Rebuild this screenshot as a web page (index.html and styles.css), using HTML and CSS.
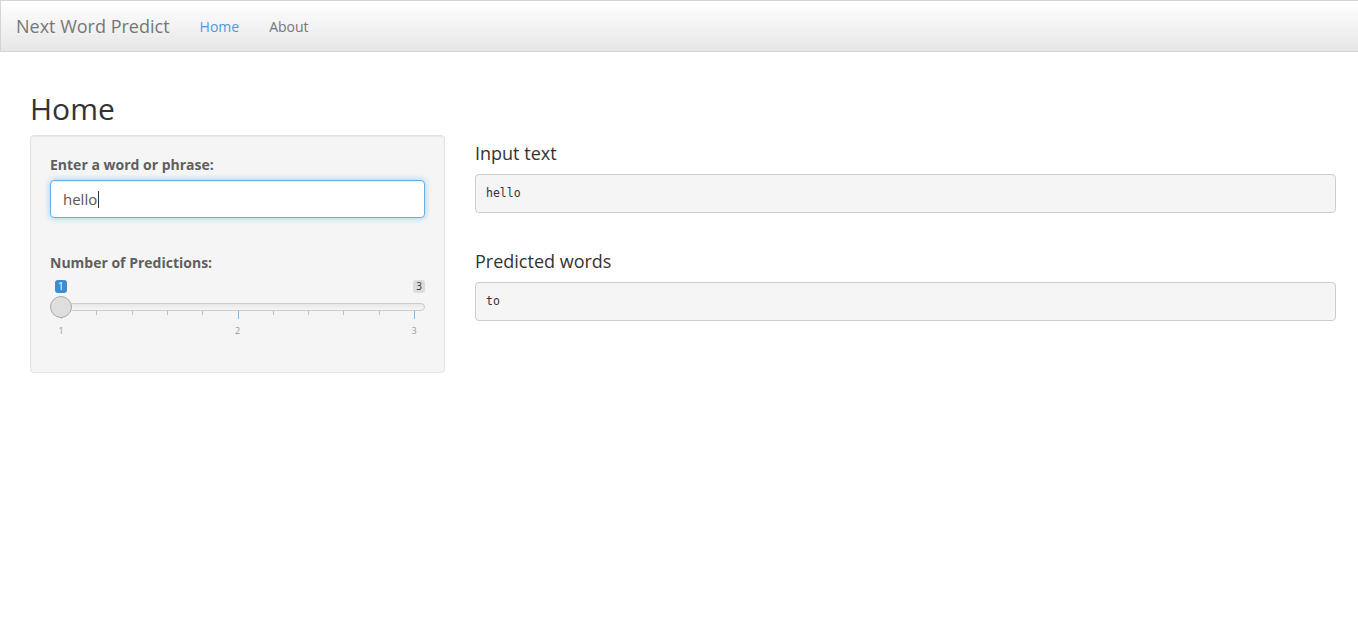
FILE: index.html
```html
<!DOCTYPE html>
<html>
<head>
<meta charset="utf-8">
<title>Next Word Predict</title>
<link rel="stylesheet" href="styles.css">
</head>
<body>
<nav class="navbar">
  <span class="brand">Next Word Predict</span>
  <ul class="nav">
    <li class="nav-item active">Home</li>
    <li class="nav-item">About</li>
  </ul>
</nav>
<main class="page">
  <h2 class="title">Home</h2>
  <div class="row">
    <aside class="side">
      <div class="well">
        <div class="form-group">
          <label class="label">Enter a word or phrase:</label>
          <div class="input" role="textbox">hello<span class="caret"></span></div>
        </div>
        <div class="form-group slider-group">
          <label class="label">Number of Predictions:</label>
          <div class="irs">
            <span class="irs-from">1</span>
            <span class="irs-max">3</span>
            <span class="irs-line"></span>
            <div class="irs-grid">
              <span class="pol major" style="left:0%"></span>
              <span class="pol" style="left:10%"></span>
              <span class="pol" style="left:20%"></span>
              <span class="pol" style="left:30%"></span>
              <span class="pol" style="left:40%"></span>
              <span class="pol major" style="left:50%"></span>
              <span class="pol" style="left:60%"></span>
              <span class="pol" style="left:70%"></span>
              <span class="pol" style="left:80%"></span>
              <span class="pol" style="left:90%"></span>
              <span class="pol major" style="left:100%"></span>
              <span class="grid-text" style="left:0%">1</span>
              <span class="grid-text" style="left:50%">2</span>
              <span class="grid-text" style="left:100%">3</span>
            </div>
            <span class="irs-handle"></span>
          </div>
        </div>
      </div>
    </aside>
    <section class="main">
      <h4 class="out-title">Input text</h4>
      <pre class="out">hello</pre>
      <h4 class="out-title second">Predicted words</h4>
      <pre class="out">to</pre>
    </section>
  </div>
</main>
</body>
</html>
```
FILE: styles.css
```css
* { box-sizing: border-box; }
html, body { margin: 0; padding: 0; }
body {
  font-family: "Open Sans", "Liberation Sans", sans-serif;
  font-size: 14px;
  line-height: 1.42857;
  color: #333;
  background: #fff;
}
.navbar {
  display: flex;
  align-items: center;
  height: 52px;
  border: 1px solid #d4d4d4;
  border-right: none;
  background: linear-gradient(to bottom, #ffffff 0%, #e6e6e6 100%);
  margin-bottom: 20px;
}
.brand {
  padding: 0 15px;
  font-size: 18px;
  line-height: 20px;
  color: #777;
}
.nav {
  list-style: none;
  display: flex;
  margin: 0;
  padding: 2px 0 0;
}
.nav-item {
  padding: 0 15px;
  font-size: 14px;
  line-height: 20px;
  color: #777;
}
.nav-item.active { color: #4a9ae6; }
.page { padding: 20px 22px 0 30px; }
.title {
  margin: 0 0 10px;
  font-size: 30px;
  font-weight: 400;
  line-height: 1.1;
  color: #333;
}
.row {
  display: flex;
  gap: 30px;
}
.side { width: 415px; flex: none; }
.main { flex: 1; padding-right: 0; }
.well {
  background: #f5f5f5;
  border: 1px solid #e3e3e3;
  border-radius: 4px;
  padding: 19px;
  box-shadow: inset 0 1px 1px rgba(0,0,0,.05);
}
.form-group { margin-bottom: 15px; }
.form-group:last-child { margin-bottom: 0; }
.label {
  display: block;
  font-weight: 700;
  font-size: 14px;
  line-height: 20px;
  color: #5f5f5f;
  margin-bottom: 5px;
}
.input {
  height: 38px;
  padding: 7px 12px;
  font-size: 15px;
  line-height: 22px;
  color: #555;
  background: #fff;
  border: 1px solid #66afe9;
  border-radius: 4px;
  box-shadow: inset 0 1px 1px rgba(0,0,0,.075), 0 0 6px rgba(102,175,233,.6);
}
.caret {
  display: inline-block;
  width: 1px;
  height: 17px;
  background: #333;
  vertical-align: -3px;
  margin-left: 1px;
}
.slider-group { margin-top: 35px; }
.irs {
  position: relative;
  height: 60px;
  margin-bottom: 15px;
}
.irs-from, .irs-max {
  position: absolute;
  top: 2px;
  font-size: 10px;
  line-height: 13px;
  padding: 0 3px;
  border-radius: 3px;
}
.irs-from { left: 5px; background: #428bca; color: #fff; }
.irs-max { right: 0; background: rgba(0,0,0,.1); color: #333; }
.irs-line {
  position: absolute;
  top: 25px;
  left: 0;
  right: 0;
  height: 8px;
  border: 1px solid #ccc;
  border-radius: 8px;
  background: linear-gradient(to bottom, #dedede -50%, #ffffff 150%);
}
.irs-handle {
  position: absolute;
  top: 18px;
  left: 0;
  width: 22px;
  height: 22px;
  border: 1px solid #ababab;
  border-radius: 50%;
  background: #dedede;
  box-shadow: 1px 1px 3px rgba(255,255,255,.3);
}
.irs-grid {
  position: absolute;
  top: 33px;
  left: 11px;
  right: 11px;
  height: 20px;
}
.pol {
  position: absolute;
  top: 0;
  width: 1px;
  height: 4px;
  background: #999;
  opacity: .6;
}
.pol.major { height: 8px; background: #428bca; opacity: .6; }
.grid-text {
  position: absolute;
  top: 14px;
  width: 20px;
  margin-left: -10px;
  text-align: center;
  font-size: 9px;
  line-height: 11px;
  color: #999;
}
.out-title {
  margin: 9px 0 10px;
  font-size: 18px;
  font-weight: 400;
  line-height: 1.1;
  color: #333;
}
.out-title.second { margin-top: 39px; }
.out {
  margin: 0 0 10px;
  padding: 9.5px 10px;
  font-family: "DejaVu Sans Mono", "Liberation Mono", monospace;
  font-size: 11.5px;
  line-height: 18px;
  color: #333;
  background: #f5f5f5;
  border: 1px solid #ccc;
  border-radius: 4px;
}
```
